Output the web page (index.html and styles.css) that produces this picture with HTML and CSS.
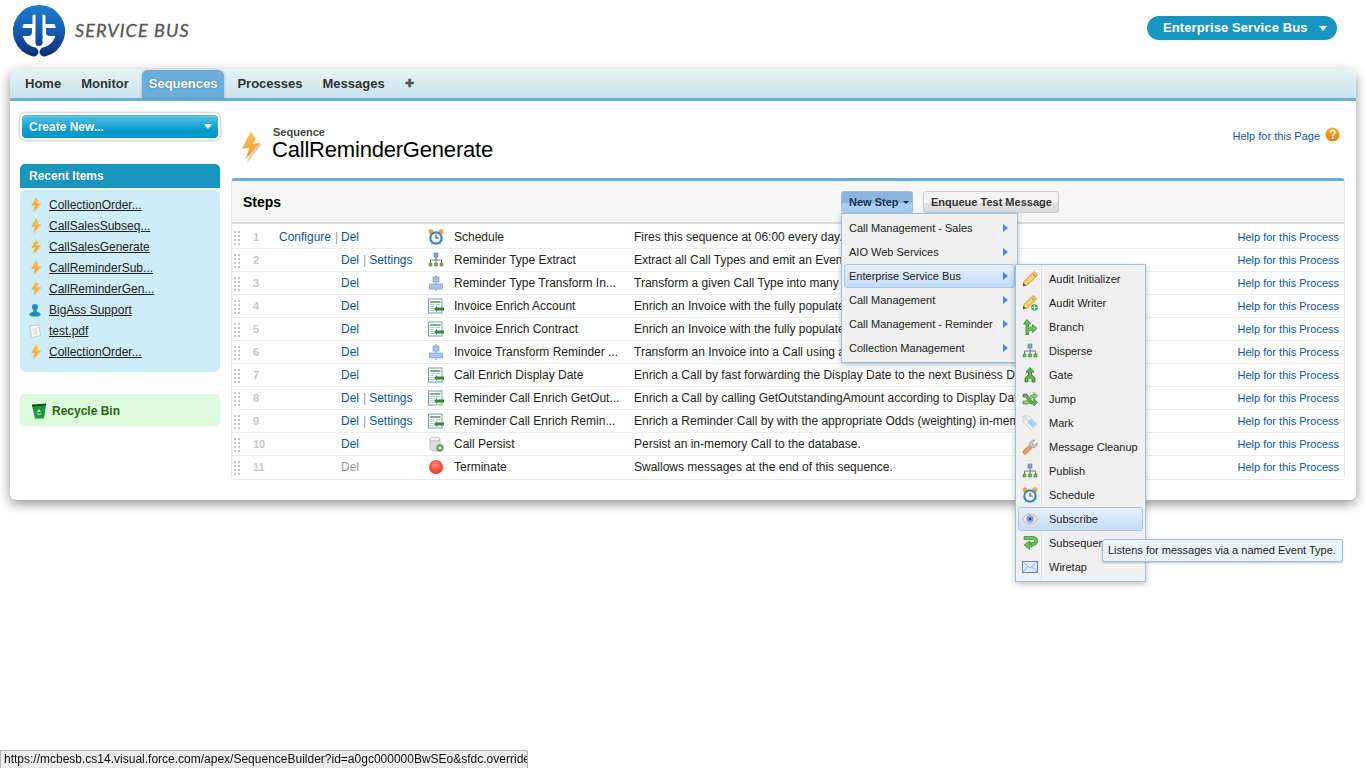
FILE: index.html
```html
<!DOCTYPE html>
<html>
<head>
  <meta charset="utf-8" />
  <title>Sequence: CallReminderGenerate</title>
  <link rel="stylesheet" href="styles.css">
</head>

<body>
  <svg class="icon-defs" width="0" height="0">
    <defs>
      <linearGradient id="logo-blue" x1="0" y1="0" x2="0" y2="52" gradientUnits="userSpaceOnUse">
        <stop offset="0" stop-color="#1c7fd0"/><stop offset="0.55" stop-color="#1558ab"/><stop offset="1" stop-color="#0d2a78"/>
      </linearGradient>
      <linearGradient id="bolt-orange" x1="0" y1="0" x2="0" y2="1">
        <stop offset="0" stop-color="#fbc55a"/><stop offset="1" stop-color="#ee9a25"/>
      </linearGradient>
      <linearGradient id="help-orange" x1="0" y1="0" x2="0" y2="1">
        <stop offset="0" stop-color="#f8b73c"/><stop offset="1" stop-color="#d97a0a"/>
      </linearGradient>
      <radialGradient id="stop-red" cx="0.45" cy="0.35" r="0.7">
        <stop offset="0" stop-color="#ff8a70"/><stop offset="1" stop-color="#e52f1c"/>
      </radialGradient>

      <symbol id="i-bolt" viewBox="0 0 16 24">
        <path d="M3 14l5-1-4 11 1 0 11-14-6 1z" fill="#d9d3c4"/>
        <path d="M7 0L0 14l6-1.300L3 22 15 8.500 9 10l2-4.500z" fill="url(#bolt-orange)"/>
      </symbol>
      <symbol id="i-clock" viewBox="0 0 16 16">
        <circle cx="3" cy="2.800" r="2.500" fill="#f0a830"/><circle cx="13" cy="2.800" r="2.500" fill="#f0a830"/>
        <path d="M3 15.500l1.500-1.500M13 15.500L11.500 14" stroke="#888" stroke-width="1"/>
        <circle cx="8" cy="9" r="6.800" fill="#3f86c8"/><circle cx="8" cy="9" r="4.600" fill="#eef4fa"/>
        <path d="M8 5.800V9h2.800" fill="none" stroke="#445" stroke-width="1.100"/>
      </symbol>
      <symbol id="i-tree" viewBox="0 0 16 16">
        <rect x="6" y="1" width="4" height="4" fill="#7aa6dc" stroke="#4a78b8" stroke-width=".6"/>
        <path d="M8 5v3M2.500 11V8h11v3M8 8v3" fill="none" stroke="#777"/>
        <path d="M1 11h3v3H1zM6.500 11h3v3h-3zM12 11h3v3h-3z" fill="#70b85c" stroke="#3c8a30" stroke-width=".6"/>
      </symbol>
      <symbol id="i-stack" viewBox="0 0 16 16">
        <path d="M8 0v16" stroke="#6d93c8"/>
        <rect x="5" y="2" width="6" height="5" fill="#a9c2e8" stroke="#7d9fd0" stroke-width=".7"/>
        <rect x="1.500" y="9" width="13" height="5" fill="#a9c2e8" stroke="#7d9fd0" stroke-width=".7"/>
      </symbol>
      <symbol id="i-enrich" viewBox="0 0 16 16">
        <rect x=".5" y="1" width="13.500" height="14" fill="#fff" stroke="#6f98cc"/>
        <rect x="2" y="3" width="10.500" height="2" fill="#86b070"/>
        <path d="M2.500 6.500h4M8 6.500h4M2.500 8.500h3M2.500 10.500h3M2.500 12.500h4" stroke="#a8c4e4"/>
        <path d="M16 9.500H9V8l-3 3 3 3v-1.500h7z" fill="#2f8a2a"/>
      </symbol>
      <symbol id="i-db" viewBox="0 0 16 16">
        <path d="M2 3v10c0 1.400 2.500 2 5 2s5-.6 5-2V3z" fill="#dfdfdf" stroke="#aaa" stroke-width=".7"/>
        <ellipse cx="7" cy="3" rx="5" ry="2" fill="#f5f5f5" stroke="#aaa" stroke-width=".7"/>
        <circle cx="12" cy="12" r="3.700" fill="#45a845"/>
        <path d="M12 10v4M10 12h4" stroke="#fff" stroke-width="1.300"/>
      </symbol>
      <symbol id="i-stop" viewBox="0 0 16 16">
        <circle cx="8" cy="8" r="7" fill="url(#stop-red)"/>
      </symbol>
      <symbol id="i-pencil" viewBox="0 0 16 16">
        <path d="M1 15l1-4.500L11 1.500c.8-.8 1.800-.8 2.500 0l1 1c.8.800.8 1.700 0 2.500L5.500 14z" fill="#f5d26a" stroke="#b98a2e" stroke-width=".8"/>
        <path d="M10.500 2.500L14 6" stroke="#e8905a" stroke-width="1.500"/>
        <path d="M1 15l.6-3 2.400 2.400z" fill="#554"/>
      </symbol>
      <symbol id="i-pencil-add" viewBox="0 0 16 16">
        <path d="M1 14l1-4.500L10 1.500c.8-.8 1.800-.8 2.500 0l1 1c.8.800.8 1.700 0 2.500L5.500 13z" fill="#f5d26a" stroke="#b98a2e" stroke-width=".8"/>
        <path d="M9.500 2.500L13 6" stroke="#e8905a" stroke-width="1.500"/>
        <path d="M1 14l.6-3 2.400 2.400z" fill="#554"/>
        <circle cx="12.500" cy="12.500" r="3.300" fill="#45a845"/>
        <path d="M12.500 10.500v4M10.500 12.500h4" stroke="#fff" stroke-width="1.200"/>
      </symbol>
      <symbol id="i-branch" viewBox="0 0 16 16">
        <path d="M4 16V5H1.500L5 .5 8.500 5H6.500v4.500c1.200-1 2.500-1.500 4-1.500V5.500L15 9.500l-4.500 4V11c-2 0-4 1-4 2.500V16z" fill="#6fc05c" stroke="#2f8a2a" stroke-width=".8"/>
      </symbol>
      <symbol id="i-gate" viewBox="0 0 16 16">
        <path d="M8 .5L12 5h-2.500v2.500L13 11v4h-3v-2.500l-2-2-2 2V15H3v-4l3.500-3.500V5H4z" fill="#62b04e" stroke="#2f7a28" stroke-width=".8"/>
      </symbol>
      <symbol id="i-jump" viewBox="0 0 16 16">
        <path d="M1 3h4l5 7h2V8l3.500 3.500L12 15v-2H8.500l-5-7H1z" fill="#5cb04c" stroke="#2f7a28" stroke-width=".6"/>
        <path d="M1 10h3l1.500-1.500 2 2.500-1.500 2H1zM8.500 5.500l1-1.500H12V1.500L15.500 5 12 8.500V6.500h-1.500l-1 1z" fill="#8fd07c" stroke="#2f7a28" stroke-width=".6"/>
      </symbol>
      <symbol id="i-tag" viewBox="0 0 16 16">
        <path d="M1 1h6l8 8-6 6-8-8z" fill="#f2f2f2" stroke="#c4c4c4" stroke-width=".8"/>
        <path d="M6 5l3-1 5 5-3.500 3.500-5-5z" fill="#a8cdf2"/>
        <circle cx="3.500" cy="3.500" r="1" fill="#fff" stroke="#aaa" stroke-width=".6"/>
      </symbol>
      <symbol id="i-wrench" viewBox="0 0 16 16">
        <path d="M1 12L8 6l2.500 2.500L4 15c-1.800 1-4-1.200-3-3z" fill="#f09a5c" stroke="#d06f2c" stroke-width=".6"/>
        <path d="M7.500 6.500C7 3 10 .5 13 1.200L10.500 3.500l.5 2 2 .5 2.300-2.300c.5 3-2 5.600-5.300 5z" fill="#c8c8c8" stroke="#8a8a8a" stroke-width=".6"/>
      </symbol>
      <symbol id="i-eye" viewBox="0 0 16 16">
        <path d="M.5 8C3 4.200 5.500 3 8 3s5 1.200 7.500 5c-2.500 3.800-5 5-7.500 5S3 11.800.5 8z" fill="#f5ece2" stroke="#c4a68c" stroke-width=".9"/>
        <circle cx="8" cy="8" r="3.800" fill="#7ba2e0"/><circle cx="8" cy="8" r="1.300" fill="#2a3f74"/>
      </symbol>
      <symbol id="i-subseq" viewBox="0 0 16 16">
        <path d="M2 1.500h9c3 0 4.500 2 4.500 4.500S14 10.500 11 10.500H7.500v-3H11c1 0 1.500-.6 1.500-1.500S12 4.500 11 4.500H2z" fill="#6fc05c" stroke="#2f8a2a" stroke-width=".7"/>
        <path d="M7.500 6L2 10l5.500 4.500V12H10V9H7.500z" fill="#6fc05c" stroke="#2f8a2a" stroke-width=".7"/>
      </symbol>
      <symbol id="i-mail" viewBox="0 0 16 16">
        <rect x=".5" y="2.500" width="15" height="11" fill="#dfeafa" stroke="#5f8cc8"/>
        <path d="M1 3l7 6 7-6M1 13l5-5.500M15 13l-5-5.500" fill="none" stroke="#88a9d8" stroke-width=".8"/>
      </symbol>
      <symbol id="i-user" viewBox="0 0 16 16">
        <circle cx="8" cy="4.500" r="3.500" fill="#1591c4"/>
        <path d="M6.500 7h3l.5 3c2.500.5 4.500 1.500 4.500 3.500 0 1.500-3 2-6.500 2s-6.500-.5-6.500-2C1.500 11.500 3.500 10.500 6 10z" fill="#1591c4"/>
      </symbol>
      <symbol id="i-doc" viewBox="0 0 16 16">
        <path d="M2 2.500L11.500.8 14.500 13 4.500 15.500z" fill="#fafafa" stroke="#b4b4b4" stroke-width=".7"/>
        <path d="M5 6l5.500-1.200M5.400 8l5.500-1.200M5.800 10l5.500-1.200M6.200 12l5.500-1.200" stroke="#bbb" stroke-width=".7"/>
      </symbol>
      <symbol id="i-bin" viewBox="0 0 16 16">
        <path d="M1 2.500L15 1.500 13 15.500H4z" fill="#1f9438"/>
        <path d="M1 1.500l14-1v2l-14 1z" fill="#0c4f1c"/>
        <path d="M8 6l2 3H6zM5.500 10.500h2v2zM10.500 10.500l-2 2v-2z" fill="#cfeccf"/>
      </symbol>
      <symbol id="i-help" viewBox="0 0 16 16">
        <circle cx="8" cy="8" r="7.500" fill="url(#help-orange)"/>
        <path d="M5.700 6C5.900 4.500 7 3.800 8.200 3.800c1.500 0 2.400.9 2.400 2.100 0 1.800-2.200 1.900-2.200 3.400" fill="none" stroke="#fff" stroke-width="1.600"/>
        <rect x="7.400" y="10.500" width="2" height="2" fill="#fff"/>
      </symbol>
    </defs>
  </svg>

  <header class="top-bar">
    <div class="brand">
      <svg class="brand-logo" viewBox="0 0 52 52">
        <path d="M21 47A21.500 21.500 0 1 1 31 47" fill="none" stroke="url(#logo-blue)" stroke-width="9" stroke-linecap="round"/>
        <path d="M6 19H19.500V7C12 9 7.500 13 6 19z" fill="url(#logo-blue)"/>
        <path d="M46 19H32.500V7C40 9 44.500 13 46 19z" fill="url(#logo-blue)"/>
        <path d="M5 23H19V27q0 4-4 4H5z" fill="url(#logo-blue)"/>
        <path d="M47 23H33V27q0 4 4 4H47z" fill="url(#logo-blue)"/>
        <rect x="22.500" y="4" width="7" height="37" rx="3.500" fill="url(#logo-blue)"/>
      </svg>
      <span class="brand-name">SERVICE BUS</span>
    </div>
    <div class="app-switch"><span class="app-name">Enterprise Service Bus</span><span class="caret caret-white"></span></div>
  </header>

  <div class="panel">
    <nav class="tabs">
      <a class="tab">Home</a>
      <a class="tab">Monitor</a>
      <a class="tab tab-active">Sequences</a>
      <a class="tab">Processes</a>
      <a class="tab">Messages</a>
      <a class="tab tab-plus">&#10010;</a>
    </nav>

    <div class="panel-body">
      <aside class="side">
        <div class="create-new">Create New...<span class="caret caret-white"></span></div>

        <div class="recent-head">Recent Items</div>
        <ul class="recent-list">
          <li><svg class="ico-bolt"><use href="#i-bolt"/></svg><a>CollectionOrder...</a></li>
          <li><svg class="ico-bolt"><use href="#i-bolt"/></svg><a>CallSalesSubseq...</a></li>
          <li><svg class="ico-bolt"><use href="#i-bolt"/></svg><a>CallSalesGenerate</a></li>
          <li><svg class="ico-bolt"><use href="#i-bolt"/></svg><a>CallReminderSub...</a></li>
          <li><svg class="ico-bolt"><use href="#i-bolt"/></svg><a>CallReminderGen...</a></li>
          <li><svg class="ico-side"><use href="#i-user"/></svg><a>BigAss Support</a></li>
          <li><svg class="ico-side"><use href="#i-doc"/></svg><a>test.pdf</a></li>
          <li><svg class="ico-bolt"><use href="#i-bolt"/></svg><a>CollectionOrder...</a></li>
        </ul>

        <div class="recycle"><svg class="ico-16"><use href="#i-bin"/></svg>Recycle Bin</div>
      </aside>

      <main class="content">
        <div class="page-head">
          <svg class="page-icon"><use href="#i-bolt"/></svg>
          <div class="page-titles">
            <div class="page-type">Sequence</div>
            <h1 class="page-title">CallReminderGenerate</h1>
          </div>
          <div class="page-help"><a class="link">Help for this Page</a><svg class="ico-help"><use href="#i-help"/></svg></div>
        </div>

        <section class="steps">
          <div class="steps-head">
            <h2 class="steps-title">Steps</h2>
            <div class="steps-buttons">
              <div class="btn btn-open">New Step<span class="caret caret-dark"></span></div>
              <div class="btn">Enqueue Test Message</div>
            </div>
          </div>

          <div class="step-row">
            <span class="drag"></span><span class="num">1</span>
            <span class="acts-left"><a class="link">Configure</a><i class="pipe">|</i></span>
            <span class="acts"><a class="link">Del</a></span>
            <svg class="ico-16"><use href="#i-clock"/></svg>
            <span class="name">Schedule</span>
            <span class="desc">Fires this sequence at 06:00 every day.</span>
            <a class="link row-help">Help for this Process</a>
          </div>
          <div class="step-row">
            <span class="drag"></span><span class="num">2</span>
            <span class="acts-left"></span>
            <span class="acts"><a class="link">Del</a><i class="pipe">|</i><a class="link">Settings</a></span>
            <svg class="ico-16"><use href="#i-tree"/></svg>
            <span class="name">Reminder Type Extract</span>
            <span class="desc">Extract all Call Types and emit an Event for each</span>
            <a class="link row-help">Help for this Process</a>
          </div>
          <div class="step-row">
            <span class="drag"></span><span class="num">3</span>
            <span class="acts-left"></span>
            <span class="acts"><a class="link">Del</a></span>
            <svg class="ico-16"><use href="#i-stack"/></svg>
            <span class="name">Reminder Type Transform In...</span>
            <span class="desc">Transform a given Call Type into many Invoices</span>
            <a class="link row-help">Help for this Process</a>
          </div>
          <div class="step-row">
            <span class="drag"></span><span class="num">4</span>
            <span class="acts-left"></span>
            <span class="acts"><a class="link">Del</a></span>
            <svg class="ico-16"><use href="#i-enrich"/></svg>
            <span class="name">Invoice Enrich Account</span>
            <span class="desc">Enrich an Invoice with the fully populated Account</span>
            <a class="link row-help">Help for this Process</a>
          </div>
          <div class="step-row">
            <span class="drag"></span><span class="num">5</span>
            <span class="acts-left"></span>
            <span class="acts"><a class="link">Del</a></span>
            <svg class="ico-16"><use href="#i-enrich"/></svg>
            <span class="name">Invoice Enrich Contract</span>
            <span class="desc">Enrich an Invoice with the fully populated Contract</span>
            <a class="link row-help">Help for this Process</a>
          </div>
          <div class="step-row">
            <span class="drag"></span><span class="num">6</span>
            <span class="acts-left"></span>
            <span class="acts"><a class="link">Del</a></span>
            <svg class="ico-16"><use href="#i-stack"/></svg>
            <span class="name">Invoice Transform Reminder ...</span>
            <span class="desc">Transform an Invoice into a Call using a mapping</span>
            <a class="link row-help">Help for this Process</a>
          </div>
          <div class="step-row">
            <span class="drag"></span><span class="num">7</span>
            <span class="acts-left"></span>
            <span class="acts"><a class="link">Del</a></span>
            <svg class="ico-16"><use href="#i-enrich"/></svg>
            <span class="name">Call Enrich Display Date</span>
            <span class="desc">Enrich a Call by fast forwarding the Display Date to the next Business Day</span>
            <a class="link row-help">Help for this Process</a>
          </div>
          <div class="step-row">
            <span class="drag"></span><span class="num">8</span>
            <span class="acts-left"></span>
            <span class="acts"><a class="link">Del</a><i class="pipe">|</i><a class="link">Settings</a></span>
            <svg class="ico-16"><use href="#i-enrich"/></svg>
            <span class="name">Reminder Call Enrich GetOut...</span>
            <span class="desc">Enrich a Call by calling GetOutstandingAmount according to Display Date</span>
            <a class="link row-help">Help for this Process</a>
          </div>
          <div class="step-row">
            <span class="drag"></span><span class="num">9</span>
            <span class="acts-left"></span>
            <span class="acts"><a class="link">Del</a><i class="pipe">|</i><a class="link">Settings</a></span>
            <svg class="ico-16"><use href="#i-enrich"/></svg>
            <span class="name">Reminder Call Enrich Remin...</span>
            <span class="desc">Enrich a Reminder Call by with the appropriate Odds (weighting) in-memory</span>
            <a class="link row-help">Help for this Process</a>
          </div>
          <div class="step-row">
            <span class="drag"></span><span class="num">10</span>
            <span class="acts-left"></span>
            <span class="acts"><a class="link">Del</a></span>
            <svg class="ico-16"><use href="#i-db"/></svg>
            <span class="name">Call Persist</span>
            <span class="desc">Persist an in-memory Call to the database.</span>
            <a class="link row-help">Help for this Process</a>
          </div>
          <div class="step-row">
            <span class="drag"></span><span class="num">11</span>
            <span class="acts-left"></span>
            <span class="acts"><a class="link link-off">Del</a></span>
            <svg class="ico-16"><use href="#i-stop"/></svg>
            <span class="name">Terminate</span>
            <span class="desc">Swallows messages at the end of this sequence.</span>
            <a class="link row-help">Help for this Process</a>
          </div>
        </section>
      </main>
    </div>
  </div>

  <!-- open dropdowns lie over the steps table -->
  <ul class="menu menu-groups">
    <li class="menu-item">Call Management - Sales<span class="arrow"></span></li>
    <li class="menu-item">AIO Web Services<span class="arrow"></span></li>
    <li class="menu-item menu-item-on">Enterprise Service Bus<span class="arrow"></span></li>
    <li class="menu-item">Call Management<span class="arrow"></span></li>
    <li class="menu-item">Call Management - Reminder<span class="arrow"></span></li>
    <li class="menu-item">Collection Management<span class="arrow"></span></li>
  </ul>

  <ul class="menu menu-steps">
    <li class="menu-item"><svg class="ico-16"><use href="#i-pencil"/></svg>Audit Initializer</li>
    <li class="menu-item"><svg class="ico-16"><use href="#i-pencil-add"/></svg>Audit Writer</li>
    <li class="menu-item"><svg class="ico-16"><use href="#i-branch"/></svg>Branch</li>
    <li class="menu-item"><svg class="ico-16"><use href="#i-tree"/></svg>Disperse</li>
    <li class="menu-item"><svg class="ico-16"><use href="#i-gate"/></svg>Gate</li>
    <li class="menu-item"><svg class="ico-16"><use href="#i-jump"/></svg>Jump</li>
    <li class="menu-item"><svg class="ico-16"><use href="#i-tag"/></svg>Mark</li>
    <li class="menu-item"><svg class="ico-16"><use href="#i-wrench"/></svg>Message Cleanup</li>
    <li class="menu-item"><svg class="ico-16"><use href="#i-tree"/></svg>Publish</li>
    <li class="menu-item"><svg class="ico-16"><use href="#i-clock"/></svg>Schedule</li>
    <li class="menu-item menu-item-on"><svg class="ico-16"><use href="#i-eye"/></svg>Subscribe</li>
    <li class="menu-item"><svg class="ico-16"><use href="#i-subseq"/></svg>Subsequence</li>
    <li class="menu-item"><svg class="ico-16"><use href="#i-mail"/></svg>Wiretap</li>
  </ul>

  <div class="tooltip">Listens for messages via a named Event Type.</div>

  <div class="status-url">https://mcbesb.cs14.visual.force.com/apex/SequenceBuilder?id=a0gc000000BwSEo&amp;sfdc.override</div>
</body>
</html>
```

FILE: styles.css
```css
* {
  box-sizing: border-box;
}

body {
  margin: 0;
  min-height: 768px;
  background-color: white;
  color: #222;
  font-family: 'Liberation Sans', Arial, sans-serif;
  font-size: 12px;
}

ul {
  margin: 0;
  padding: 0;
  list-style: none;
}

.icon-defs {
  position: absolute;
}

.ico-16 {
  width: 16px;
  height: 16px;
  flex: none;
}

/* top bar */
.top-bar {
  height: 69px;
  display: flex;
  justify-content: space-between;
  padding: 5px 29px 0 13px;
}

.brand {
  display: flex;
  align-items: center;
  height: 52px;
}

.brand-logo {
  width: 52px;
  height: 52px;
}

.brand-name {
  margin-left: 10px;
  margin-bottom: 2px;
  font-family: 'Lato', sans-serif;
  font-style: italic;
  font-size: 18px;
  letter-spacing: 1.1px;
  color: #555;
  -webkit-text-stroke: 0.3px #555;
}

.app-switch {
  display: flex;
  align-items: center;
  width: 190px;
  height: 24px;
  margin-top: 11px;
  padding: 0 10px 0 16px;
  border-radius: 12px;
  background-color: #1797c0;
  color: white;
  font-size: 13px;
  font-weight: bold;
  justify-content: space-between;
}

.app-name {
  margin-bottom: 2px;
  letter-spacing: 0.1px;
}

.caret {
  width: 0;
  height: 0;
  border-left: 4px solid transparent;
  border-right: 4px solid transparent;
  border-top: 5px solid white;
}

.caret-dark {
  border-left-width: 3px;
  border-right-width: 3px;
  border-top: 3px solid #222;
  margin-left: 4px;
}

/* main panel */
.panel {
  width: 1346px;
  height: 431px;
  margin-left: 10px;
  border-radius: 6px;
  background-color: white;
  box-shadow: 0 4px 12px rgba(0, 0, 0, 0.42);
}

.tabs {
  display: flex;
  height: 32px;
  padding-left: 5px;
  border-bottom: 3px solid #6aaddb;
  border-radius: 6px 6px 0 0;
  background: linear-gradient(#e4f2f6, #c9e4ef);
}

.tab {
  display: flex;
  align-items: center;
  height: 28px;
  padding: 0 10px;
  color: #333;
  font-size: 13px;
  font-weight: bold;
}

.tab-plus {
  padding-top: 1px;
  color: #555;
  font-size: 11px;
}

.tab-active {
  padding: 0 7px 2px;
  margin: 1px 3px 0;
  border-radius: 6px 6px 0 0;
  background-color: #6aaddb;
  color: white;
  box-shadow: 0 0 3px rgba(0, 0, 0, 0.25);
  text-shadow: 0 0 2px rgba(0, 0, 0, 0.35);
}

.panel-body {
  display: flex;
  padding: 0 11px 0 10px;
}

/* sidebar */
.side {
  width: 200px;
  flex: none;
  padding-top: 12px;
}

.create-new {
  display: flex;
  align-items: center;
  justify-content: space-between;
  height: 27px;
  padding: 0 6px 0 7px;
  border: 2px solid white;
  border-radius: 6px;
  background: linear-gradient(#5cc3e3, #0099cc 70%);
  box-shadow: 0 0 3px rgba(0, 0, 0, 0.45);
  color: white;
  font-weight: bold;
  text-shadow: 0 0 1px rgba(0, 0, 0, 0.3);
}

.recent-head {
  height: 24px;
  margin-top: 24px;
  padding: 5px 9px;
  border-radius: 5px 5px 0 0;
  background-color: #1797c0;
  color: white;
  font-weight: bold;
  text-shadow: 0 0 1px rgba(0, 0, 0, 0.3);
}

.recent-list {
  height: 182px;
  margin-top: 2px;
  padding-top: 4px;
  border-radius: 5px;
  background-color: #cfedf8;
}

.recent-list li {
  display: flex;
  align-items: center;
  height: 21px;
  padding-left: 8px;
}

.recent-list a {
  color: #222;
  text-decoration: underline;
}

.ico-bolt {
  width: 11px;
  height: 16px;
  margin: 1px 7px 0 3px;
  flex: none;
}

.ico-side {
  width: 14px;
  height: 16px;
  margin-right: 7px;
  flex: none;
}

.recycle {
  display: flex;
  align-items: center;
  gap: 5px;
  height: 32px;
  margin-top: 22px;
  padding: 2px 0 0 11px;
  border-radius: 5px;
  background-color: #dcfadc;
  color: #2d6412;
  font-weight: bold;
}

/* content */
.content {
  flex: 1;
  margin-left: 11px;
}

.page-head {
  display: flex;
  height: 77px;
  padding: 25px 0 0 11px;
}

.page-icon {
  width: 20px;
  height: 31px;
  margin-top: 5px;
}

.page-titles {
  margin-left: 10px;
}

.page-type {
  margin-left: 1px;
  color: #444;
  font-size: 11px;
  font-weight: bold;
}

.page-title {
  margin: -1px 0 0;
  color: black;
  font-size: 22px;
  font-weight: normal;
  letter-spacing: -0.2px;
}

.page-help {
  display: flex;
  margin-left: auto;
  margin-right: 5px;
  padding-top: 4px;
  gap: 5px;
  font-size: 11px;
}

.ico-help {
  width: 15px;
  height: 15px;
  margin-top: -3px;
}

.link {
  color: #0b55a0;
}

.link-off {
  color: #999;
}

/* steps table */
.steps {
  height: 302px;
  border: 1px solid #e8e8e8;
  border-top: 3px solid #6aaddb;
  border-bottom-width: 2px;
  border-radius: 4px;
}

.steps-head {
  position: relative;
  display: flex;
  align-items: center;
  height: 43px;
  margin-bottom: 2px;
  padding-left: 11px;
  border-bottom: 2px solid #dcdcdc;
  background-color: #f7f7f7;
}

.steps-title {
  margin: 0;
  color: black;
  font-size: 14px;
  font-weight: bold;
}

.steps-buttons {
  position: absolute;
  left: 609px;
  top: 10px;
  display: flex;
  gap: 10px;
}

.btn {
  display: flex;
  align-items: center;
  height: 22px;
  padding: 0 6px 1px 7px;
  border: 1px solid #ccc;
  border-radius: 3px;
  background: linear-gradient(#f4f4f4 55%, #dedede 55%);
  color: #333;
  font-size: 11px;
  font-weight: bold;
  white-space: nowrap;
}

.btn-open {
  width: 72px;
  border-color: #9bbde0;
  border-bottom: none;
  background: linear-gradient(#8ab4de 50%, #a9cdf2 50%);
  color: #23344a;
}

.step-row {
  display: grid;
  grid-template-columns: 21px 26px 62px 87px 26px 180px 1fr auto;
  align-items: center;
  height: 23px;
  border-bottom: 1px solid #ececec;
  white-space: nowrap;
  background-color: white;
}

.step-row:last-child {
  border-bottom-color: transparent;
}

.drag {
  width: 8px;
  height: 15px;
  margin-left: 1px;
  background: radial-gradient(circle, #c6c6c6 1.1px, transparent 1.5px) 0 0 / 4px 4px;
}

.num {
  color: #c8c8c8;
  font-weight: bold;
  font-size: 11px;
}

.acts-left {
  text-align: right;
}

.pipe {
  margin: 0 4px;
  color: #999;
  font-style: normal;
}

.acts .pipe {
  margin-right: 3px;
}

.name {
  color: #222;
}

.desc {
  overflow: hidden;
  color: #222;
}

.row-help {
  padding-right: 5px;
  font-size: 11px;
}

/* dropdown menus */
.menu {
  position: absolute;
  padding: 2px;
  border: 1px solid #9cc0e8;
  background-color: #f0f0f0;
  box-shadow: 0 2px 6px rgba(0, 0, 0, 0.25);
  font-size: 11px;
}

.menu-item {
  display: flex;
  align-items: center;
  height: 24px;
  padding: 0 4px;
  color: #222;
  border: 1px solid transparent;
  border-radius: 3px;
}

.menu-item-on {
  border-color: #a6c8ee;
  background: linear-gradient(#e6f0fb, #c5dcf8);
}

.menu-groups {
  left: 841px;
  top: 213px;
  width: 177px;
  height: 150px;
}

.menu-groups .menu-item {
  justify-content: space-between;
}

.arrow {
  width: 0;
  height: 0;
  margin-right: 2px;
  border-top: 4.500px solid transparent;
  border-bottom: 4.500px solid transparent;
  border-left: 5px solid #3f8ae0;
}

.menu-steps {
  left: 1015px;
  top: 264px;
  width: 131px;
  height: 318px;
  background: linear-gradient(to right, #f0f0f0 25px, #e2e2e2 25px, #e2e2e2 26px, #f5f5f5 26px, #f0f0f0 27px);
}

.menu-steps .menu-item {
  gap: 11px;
  padding: 0 2px 0 3px;
}

.tooltip {
  position: absolute;
  left: 1102px;
  top: 539px;
  width: 241px;
  height: 23px;
  padding: 4px 5px;
  border: 1px solid #9cc0e8;
  border-radius: 3px;
  background-color: #eaf3fd;
  box-shadow: 0 1px 2px rgba(0, 0, 0, 0.25);
  color: #222;
  font-size: 11px;
  white-space: nowrap;
}

.status-url {
  position: fixed;
  left: 0;
  bottom: 0;
  width: 528px;
  height: 18px;
  padding: 1px 3px;
  overflow: hidden;
  border: 1px solid #b4b4b4;
  border-bottom: none;
  border-radius: 0 3px 0 0;
  background-color: #ececec;
  color: #111;
  font-size: 12px;
  white-space: nowrap;
}
```
